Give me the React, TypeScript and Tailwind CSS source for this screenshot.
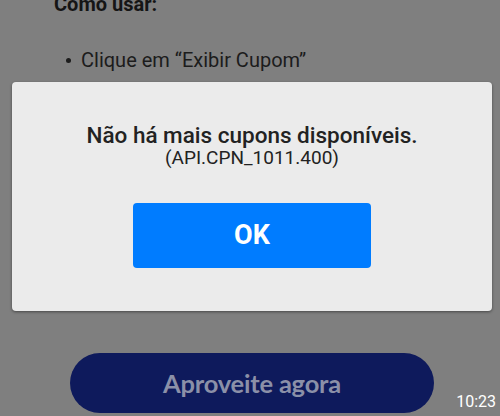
export default function App() {
  return (
    <div className="relative w-[500px] h-[416px] overflow-hidden bg-[#7f7f7f] font-['Roboto',sans-serif]">
      {/* Page under the modal */}
      <div className="flex flex-col">
        <div className="-mt-[10px] pl-[54px] text-[20px] leading-[28px] font-bold text-[#151515]">
          Como usar:
        </div>
        <ul className="mt-[28px] pl-[66px] text-[20px] leading-[28px] text-[#1c1c1c]">
          <li className="flex items-center gap-[10px]">
            <span className="w-[5px] h-[5px] rounded-full bg-[#1c1c1c]" />
            <span>Clique em “Exibir Cupom”</span>
          </li>
        </ul>
        <div className="h-[279px]" />
        <div className="pl-[70px]">
          <button
            type="button"
            className="w-[364px] h-[60px] rounded-full bg-[#0e1a5c] text-[#8b90a8] text-[25.5px] font-bold font-['Lato',sans-serif] tracking-[-0.2px]"
          >
            Aproveite agora
          </button>
        </div>
      </div>

      {/* Dialog */}
      <div className="absolute left-[12px] top-[82px] w-[480px] h-[229px] rounded-[4px] bg-[#ebebeb] shadow-[0_1px_3px_rgba(0,0,0,0.45)] flex flex-col items-center">
        <div className="mt-[40px] text-[22.5px] leading-[26px] font-medium text-[#222]">
          Não há mais cupons disponíveis.
        </div>
        <div className="text-[19px] leading-[20px] text-[#222]">
          (API.CPN_1011.400)
        </div>
        <button
          type="button"
          className="mt-[35px] w-[238px] h-[65px] rounded-[4px] bg-[#007cff] text-white text-[27px] font-bold"
        >
          OK
        </button>
      </div>

      {/* Video timestamp */}
      <div className="absolute right-[4px] bottom-[4px] text-[16px] leading-[20px] text-white">
        10:23
      </div>
    </div>
  );
}
